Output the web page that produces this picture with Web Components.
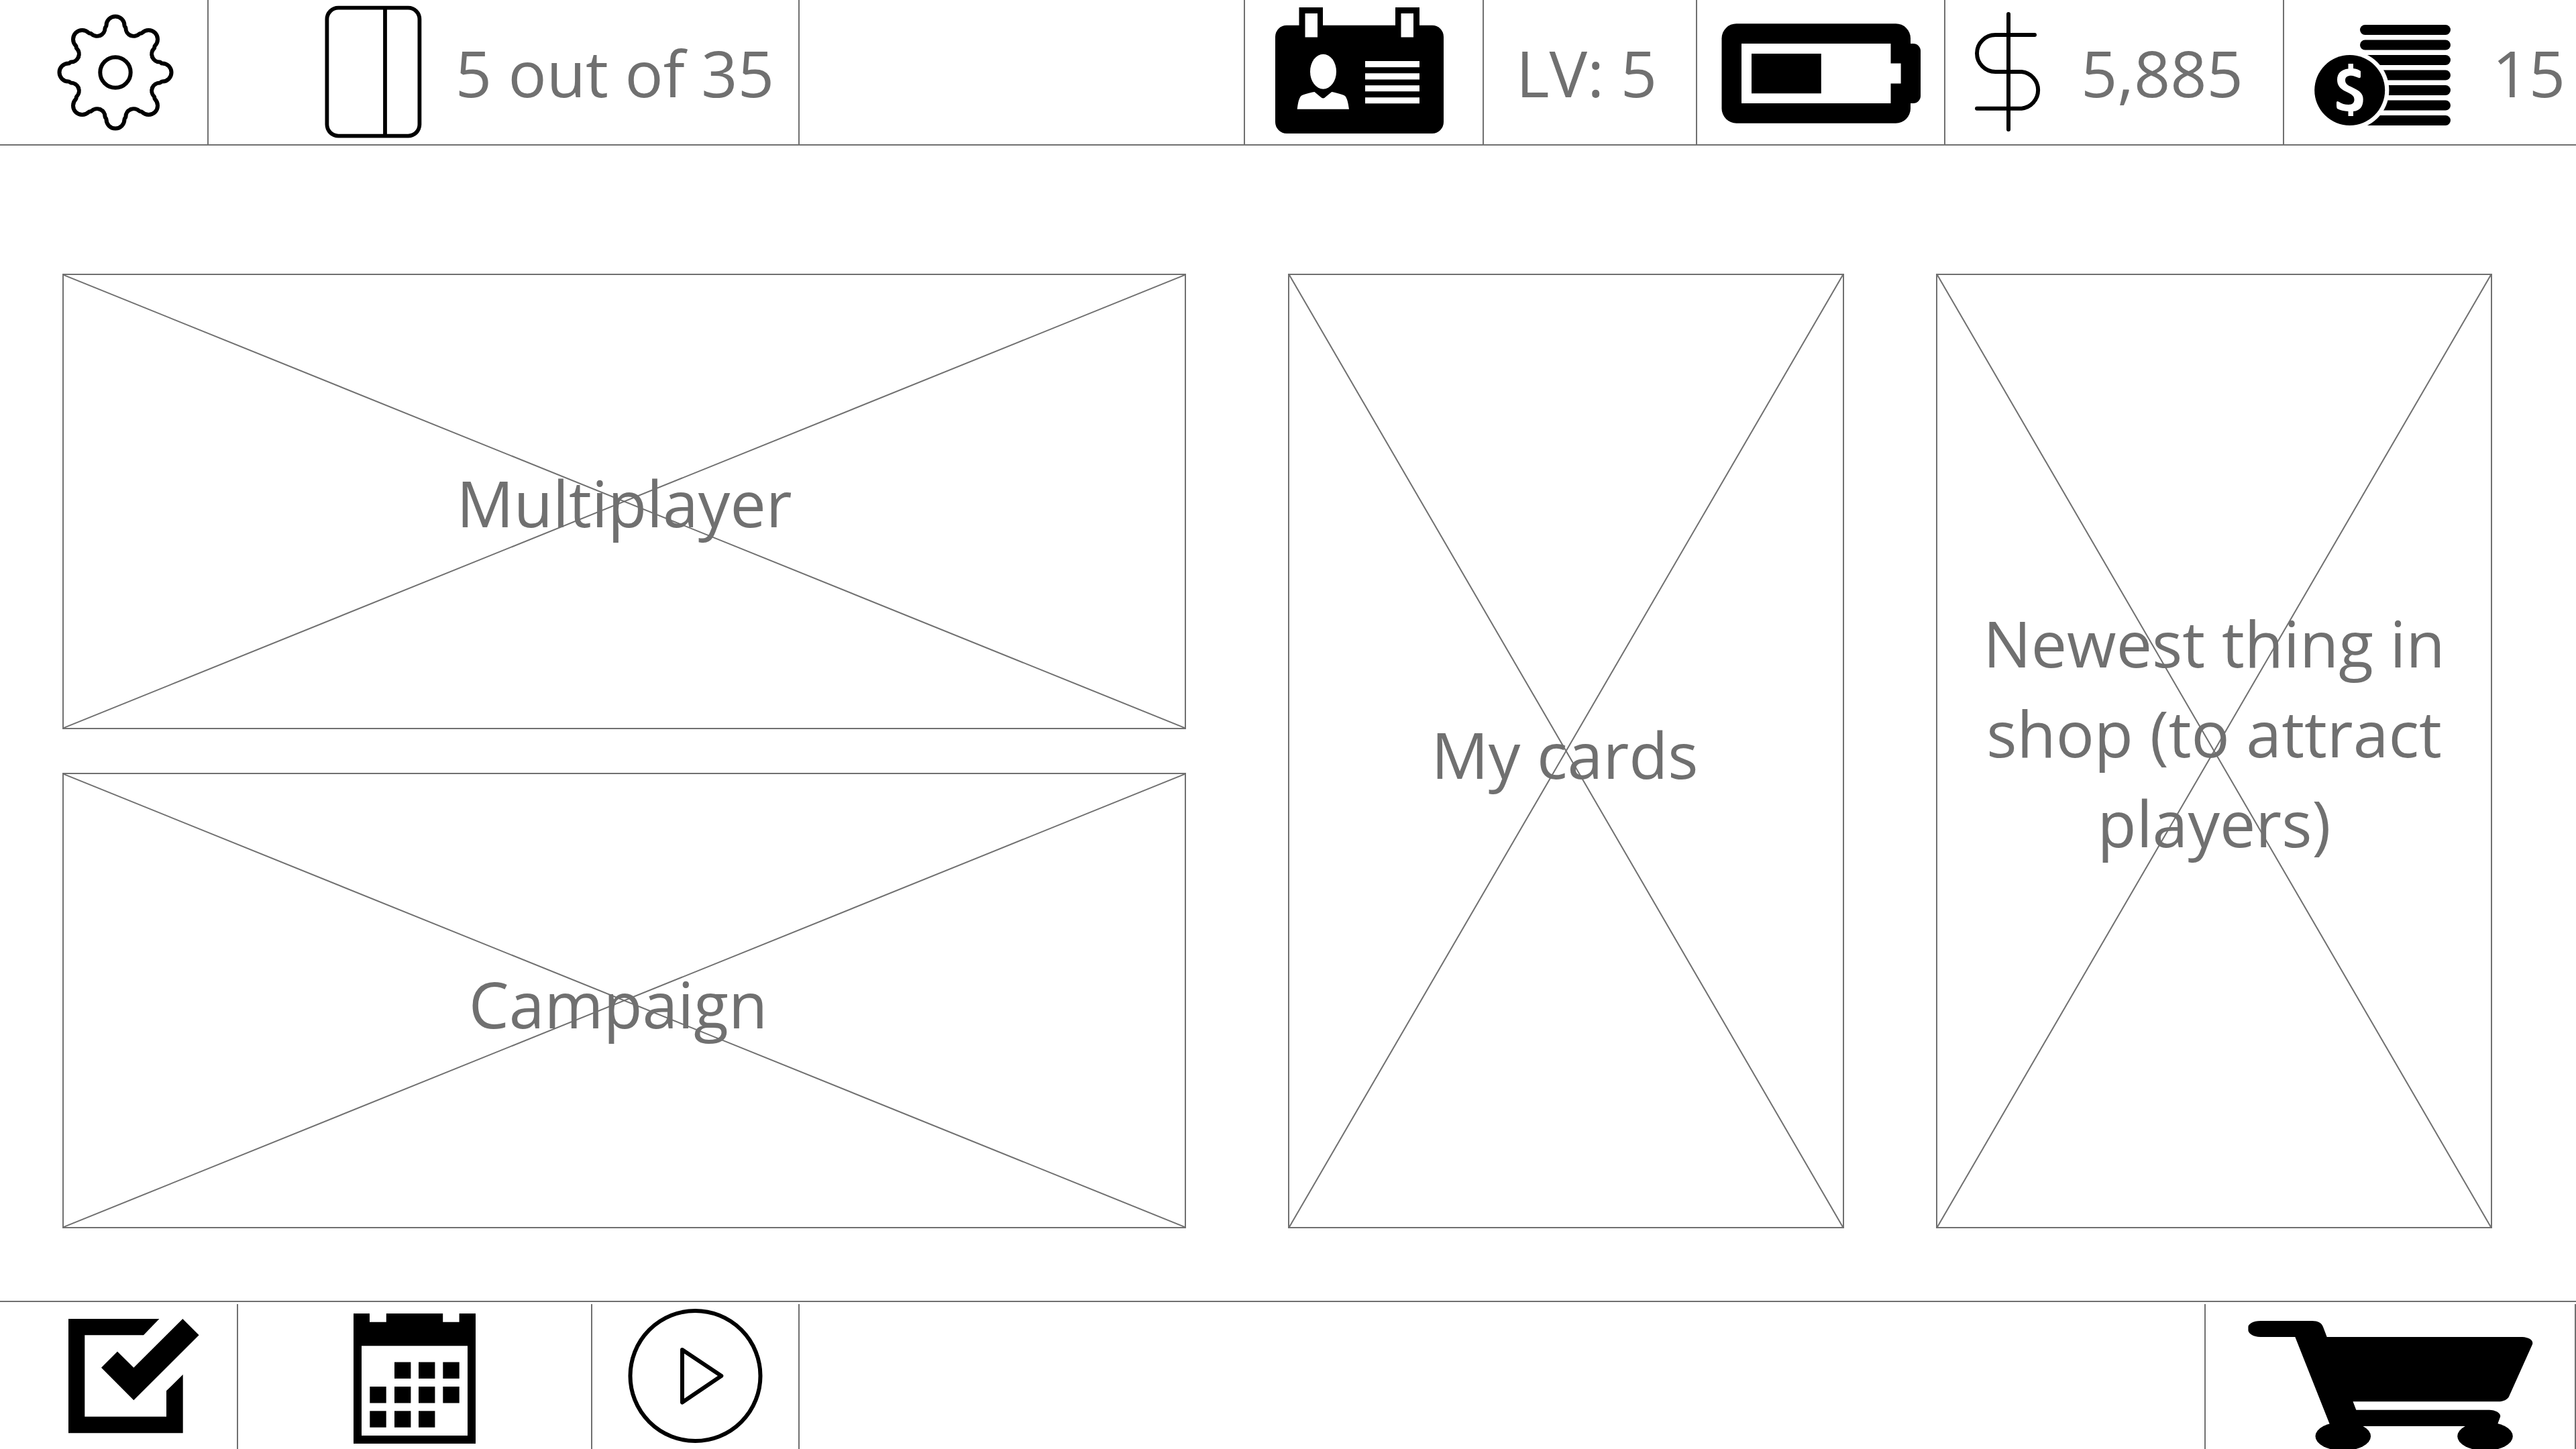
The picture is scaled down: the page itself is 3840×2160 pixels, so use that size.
<!DOCTYPE html>
<html lang="en">
<head>
<meta charset="utf-8">
<title>Card game - main menu</title>
<style>
  html, body { margin: 0; }
  body {
    background: #fff;
    color: #707070;
    font: 95px/134px "Open Sans", "Noto Sans", sans-serif;
  }
</style>
</head>
<body>
<game-home></game-home>

<script>
const define = (name, html) => {
  const template = document.createElement('template');
  template.innerHTML = html;
  customElements.define(name, class extends HTMLElement {
    constructor() {
      super();
      this.attachShadow({ mode: 'open' }).append(template.content.cloneNode(true));
    }
  });
};

/* Icons: each viewBox is [x, y, width, height] in drawing units, one unit per pixel.
   Icons of the status bar are 199 high, those of the action bar 216. */
const tooth = 'M-22.8-55.1A12 12 0 0 0-15.4-66.2C-15.4-68-13.5-68-13.5-70A13.5 13.5 0 0 1 13.5-70C13.5-68 15.4-68 15.4-66.2A12 12 0 0 0 22.8-55.1';
const ICONS = {
  gear: [[-87, -100, 174, 199],
    `<g fill="none" stroke="#000" stroke-width="6" stroke-linecap="round"><circle r="22.7"/>${
      [0, 45, 90, 135, 180, 225, 270, 315].map(a => `<path d="${tooth}" transform="rotate(${a})"/>`).join('')}</g>`],
  deck: [[484, 8, 145, 199],
    '<g fill="none" stroke="#000" stroke-width="5.8"><rect x="487.4" y="11.6" width="138" height="191" rx="17"/><path d="M574 12V203"/></g>'],
  badge: [[1900, 8, 251, 199],
    `<rect x="1900" y="37.7" width="251" height="161.3" rx="17"/>
     <path d="M1935.5 11H1971V50H1935.5ZM2079 11H2115V50H2079Z"/>
     <g fill="#fff"><path d="M1944.5 20H1963V55.5H1944.5ZM2087.5 20H2106V55.5H2087.5Z"/>
     <ellipse cx="1971.5" cy="106.7" rx="19.5" ry="26"/>
     <path d="M1932.7 162.7C1934 153 1935 147 1938.5 143C1942 140.500 1950 138.500 1958.500 137L1967.500 144.500Q1971.500 148.500 1975 144.500L1984.200 137C1992 138.500 2000 140.500 2004 143C2007.500 147 2008.500 153 2010 162.700Z"/>
     <path d="M2034 91H2115V100.300H2034ZM2034 109.300H2115V118.500H2034ZM2034 127.200H2115V136.300H2034ZM2034 145.200H2115V154.300H2034Z"/></g>`],
  battery: [[2565, 8, 297, 199],
    `<rect x="2565.5" y="35.200" width="281.500" height="148.500" rx="22"/>
     <rect x="2820" y="65" width="42" height="89" rx="11"/>
     <path fill="#fff" d="M2595 65H2817.500V94.500H2832.600V124.500H2817.500V154H2595Z"/>
     <path d="M2610 80H2713.800V139.300H2610Z"/>`],
  dollar: [[2944, 8, 100, 199],
    '<path fill="none" stroke="#000" stroke-width="6" stroke-linecap="round" d="M2994 21V193M3033 52H2974.500a27.500 27.500 0 0 0 0 55H3013.500a27.500 27.500 0 0 1 0 54.700H2947"/>'],
  coins: [[3452, 8, 203, 199],
    `${[37, 59.5, 82, 104.5, 127, 149.5, 172].map(y => `<rect x="3520" y="${y}" width="135" height="15" rx="7.5"/>`).join('')}
     <circle cx="3504.700" cy="134.500" r="58.700" fill="#fff"/><circle cx="3504.700" cy="134.500" r="52.500"/>
     <path fill="#fff" d="M3521 106V114Q3521 117 3518 116C3513 114 3510 112.700 3507 112.700C3501 112.700 3498 115 3498 119.500C3498 126 3503 127.500 3511 131.500C3519 135.500 3524.700 139 3524.700 148C3524.700 159 3520 165 3510 166V173H3502.500V166C3496 165.500 3490 164.500 3486 162C3484.800 160 3485 156 3485 153Q3485 150 3488 151.500C3493 154.500 3497 156 3503 156C3509 156 3511.500 153 3511.500 148.500C3511.500 141.500 3505 139.500 3498 136C3490 132 3486 127 3486 119C3486 109.500 3492 103.500 3502.500 102.500V95H3510V102C3514 102.500 3518 103.500 3521 106Z"/>`],
  task: [[102, 1944, 195, 216],
    `<path d="M102 1966H237.400L214 1990.300H126.300V2111.700H248V2073.300L272.700 2049V2136.300H102Z"/>
     <path d="M272.300 1966L296.600 1990.300L199.300 2087.300L151 2038.700L175 2014.700L199.300 2038.700Z"/>`],
  calendar: [[527, 1944, 182, 216],
    `<path fill-rule="evenodd" d="M527 1958H551V1970.700H575.800V1958H660.200V1970.700H684.600V1958H709V2152H527ZM539 2006.300V2140H697V2006.300Z"/>
     ${[[588, 2030.5], [624, 2030.5], [660.3, 2030.5], [551.3, 2067], [588, 2067], [624, 2067], [660.3, 2067], [551.3, 2103.3], [588, 2103.3], [624, 2103.3]]
       .map(([x, y]) => `<rect x="${x}" y="${y}" width="24.400" height="24.500"/>`).join('')}`],
  play: [[936, 1944, 201, 216],
    '<g fill="none" stroke="#000" stroke-width="6" stroke-linejoin="round"><circle cx="1036.500" cy="2051" r="97"/><path d="M1017 2012L1075.300 2051L1017 2090.500Z"/></g>'],
  cart: [[3351, 1944, 425, 216],
    `<path d="M3370 1969H3446.800C3455 1969 3461 1972 3463 1978L3468.700 1993H3760C3770 1993.500 3777 1998 3775 2004L3740 2082C3738 2086 3732 2089.300 3724.300 2089.300H3507.500L3512.300 2101.700H3710.600C3721 2102 3729 2107 3726.900 2112.500L3722 2126H3474L3421.300 1993H3370C3358 1993 3351.400 1987 3351.400 1983V1978C3351.400 1974 3358 1969 3370 1969Z"/>
     <ellipse cx="3492.800" cy="2141" rx="41.300" ry="21.500"/><ellipse cx="3704.500" cy="2141" rx="41.300" ry="21.500"/>`]
};

customElements.define('game-icon', class extends HTMLElement {
  constructor() {
    super();
    this.attachShadow({ mode: 'open' });
  }
  connectedCallback() {
    const [box, shapes] = ICONS[this.getAttribute('name')];
    this.shadowRoot.innerHTML = `
      <style>:host { display: block; flex: none; } svg { display: block; }</style>
      <svg width="${box[2]}" height="${box[3]}" viewBox="${box.join(' ')}" aria-hidden="true">${shapes}</svg>`;
  }
});

/* One compartment of a bar; its width is a share of the bar. */
define('bar-cell', `
  <style>
    :host {
      display: flex; align-items: center; box-sizing: border-box; min-width: 0;
      border-right: 2px solid #707070; white-space: nowrap;
    }
    :host([last]) { border-right: 0; }
    :host([center]) { justify-content: center; }
    :host([end]) { justify-content: flex-end; }
    ::slotted(button) {
      display: flex; margin: 0; padding: 0; border: 0; background: none; cursor: pointer;
    }
  </style>
  <slot></slot>`);

/* A crossed placeholder box that works as a menu button. */
define('menu-tile', `
  <style>
    :host { display: flex; flex: 1; min-width: 0; min-height: 0; }
    button {
      position: relative; flex: 1; box-sizing: border-box; min-width: 0; margin: 0;
      padding: 0; border: 2px solid #707070; background: none; color: inherit;
      font: inherit; text-align: center; cursor: pointer;
    }
    svg { position: absolute; inset: 0; width: 100%; height: 100%; }
    line { stroke: #707070; stroke-width: 2; vector-effect: non-scaling-stroke; }
    span { display: block; padding: var(--label-pad, 2px 0 0); }
  </style>
  <button type="button">
    <svg viewBox="0 0 100 100" preserveAspectRatio="none" aria-hidden="true">
      <line x1="0" y1="0" x2="100" y2="100"/><line x1="0" y1="100" x2="100" y2="0"/>
    </svg>
    <span><slot></slot></span>
  </button>`);

define('status-bar', `
  <style>
    :host {
      display: grid; box-sizing: border-box; height: 217px; border-bottom: 2px solid #707070;
      grid-template-columns: 311fr 881fr 664fr 356fr 318fr 370fr 505fr 435fr;
    }
    .settings { padding-left: 34px; }
    .deck { gap: 50px; padding-right: 36px; }
    .badge { padding-right: 14px; }
    .level { padding-right: 10px; }
    .cash { gap: 58px; padding-left: 44px; }
    .coins { gap: 62px; padding-right: 16px; }
  </style>
  <bar-cell class="settings" center><button type="button" aria-label="Settings"><game-icon name="gear"></game-icon></button></bar-cell>
  <bar-cell class="deck" end><game-icon name="deck"></game-icon><span>5 out of 35</span></bar-cell>
  <bar-cell></bar-cell>
  <bar-cell class="badge" center><game-icon name="badge"></game-icon></bar-cell>
  <bar-cell class="level" center><span>LV: 5</span></bar-cell>
  <bar-cell center><game-icon name="battery"></game-icon></bar-cell>
  <bar-cell class="cash"><game-icon name="dollar"></game-icon><span>5,885</span></bar-cell>
  <bar-cell class="coins" end last><game-icon name="coins"></game-icon><span>15</span></bar-cell>`);

define('action-bar', `
  <style>
    :host {
      display: grid; box-sizing: border-box; height: 221px; padding-top: 3px;
      border-top: 2px solid #707070; overflow: hidden;
      grid-template-columns: 355fr 528fr 309fr 2096fr 552fr;
    }
    .task { padding-left: 46px; }
  </style>
  <bar-cell class="task" center><button type="button" aria-label="Tasks"><game-icon name="task"></game-icon></button></bar-cell>
  <bar-cell center><button type="button" aria-label="Calendar"><game-icon name="calendar"></game-icon></button></bar-cell>
  <bar-cell center><button type="button" aria-label="Play"><game-icon name="play"></game-icon></button></bar-cell>
  <bar-cell></bar-cell>
  <bar-cell center><button type="button" aria-label="Shop"><game-icon name="cart"></game-icon></button></bar-cell>`);

define('game-home', `
  <style>
    :host { display: flex; flex-direction: column; min-height: 100vh; }
    main {
      flex: 1; display: flex; gap: 152px; box-sizing: border-box;
      padding: 191px 125px 108px 93px;
    }
    .modes { flex: 1675; display: flex; flex-direction: column; gap: 65px; min-width: 0; }
    .cards { flex: 1795; display: flex; gap: 137px; min-width: 0; }
    .campaign { --label-pad: 8px 18px 0 0; }
    .my-cards { --label-pad: 8px 4px 0 0; }
    .newest { --label-pad: 0 0 56px; }
  </style>
  <status-bar></status-bar>
  <main>
    <div class="modes">
      <menu-tile>Multiplayer</menu-tile>
      <menu-tile class="campaign">Campaign</menu-tile>
    </div>
    <div class="cards">
      <menu-tile class="my-cards">My cards</menu-tile>
      <menu-tile class="newest">Newest thing in shop (to attract players)</menu-tile>
    </div>
  </main>
  <action-bar></action-bar>`);
</script>
</body>
</html>
